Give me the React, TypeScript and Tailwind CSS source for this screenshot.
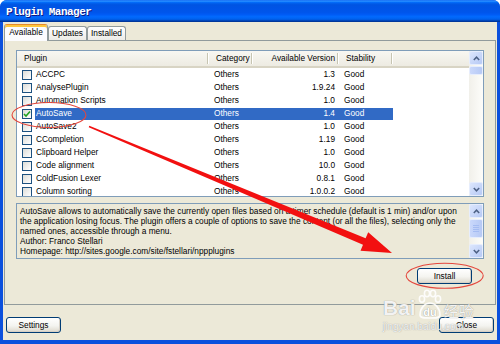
import clsx from 'clsx'
import type { ReactNode } from 'react'

type Plugin = { name: string; version: string; checked?: boolean; selected?: boolean }

const plugins: Plugin[] = [
  { name: 'ACCPC', version: '1.3' },
  { name: 'AnalysePlugin', version: '1.9.24' },
  { name: 'Automation Scripts', version: '1.0' },
  { name: 'AutoSave', version: '1.4', checked: true, selected: true },
  { name: 'AutoSave2', version: '1.0' },
  { name: 'CCompletion', version: '1.19' },
  { name: 'Clipboard Helper', version: '1.0' },
  { name: 'Code alignment', version: '10.0' },
  { name: 'ColdFusion Lexer', version: '0.8.1' },
  { name: 'Column sorting', version: '1.0.0.2' },
]

const description = [
  'AutoSave allows to automatically save the currently open files based on a timer schedule (default is 1 min) and/or upon',
  'the application losing focus. The plugin offers a couple of options to save the content (or all the files), selecting only the',
  'named ones, accessible through a menu.',
  'Author: Franco Stellari',
  'Homepage: http://sites.google.com/site/fstellari/nppplugins',
]

function Chevron({ up }: { up?: boolean }) {
  return (
    <svg width="7" height="5" viewBox="0 0 7 5">
      <polyline
        points={up ? '0.8,4 3.5,1.2 6.2,4' : '0.8,1 3.5,3.8 6.2,1'}
        fill="none"
        stroke="#4D6185"
        strokeWidth="1.5"
      />
    </svg>
  )
}

function ScrollButton({ up }: { up?: boolean }) {
  return (
    <div className="flex h-[14px] w-[14px] shrink-0 items-center justify-center rounded-[2px] border border-[#E6EDFD] bg-[linear-gradient(135deg,#DCE6FD,#B6C9F5)]">
      <Chevron up={up} />
    </div>
  )
}

function ScrollBar({ thumb, grip }: { thumb: string; grip?: boolean }) {
  return (
    <div className="flex w-[14px] shrink-0 flex-col bg-[linear-gradient(to_right,#F1F0EA,#FDFDFA)]">
      <ScrollButton up />
      <div
        className={clsx(
          'flex shrink-0 items-center justify-center rounded-[2px] border border-[#E6EDFD] bg-[linear-gradient(to_right,#CAD8FB,#B6C9F5)]',
          thumb,
        )}
      >
        {grip && (
          <div className="flex flex-col gap-px">
            {[0, 1, 2, 3].map((i) => (
              <div key={i} className="h-px w-[6px] bg-[#A5BCF2]" />
            ))}
          </div>
        )}
      </div>
      <div className="flex-1" />
      <ScrollButton />
    </div>
  )
}

function Checkbox({ checked }: { checked?: boolean }) {
  return (
    <div className="flex h-[10px] w-[10px] items-center justify-center border border-[#1C5180] bg-[linear-gradient(135deg,#DCDCD7,#FFFFFF)]">
      {checked && (
        <svg width="8" height="8" viewBox="0 0 8 8">
          <polyline points="1,4 3,6 7,1.5" fill="none" stroke="#21A121" strokeWidth="1.6" />
        </svg>
      )}
    </div>
  )
}

function HeaderCell({ className, right, children }: { className: string; right?: boolean; children: ReactNode }) {
  return (
    <div className={clsx('flex h-full items-center', className)}>
      <span className={clsx('flex-1', right ? 'pr-[2px] text-right' : 'pl-[7px]')}>{children}</span>
      <span className="h-[11px] w-[2px] border-r border-l border-r-white border-l-[#C7C5B2]" />
    </div>
  )
}

function Button({ children }: { children: ReactNode }) {
  return (
    <button
      type="button"
      className="flex h-[16px] w-[55px] items-center justify-center rounded-[3px] border border-[#003C74] bg-[linear-gradient(to_bottom,#FFFFFF,#F4F4F0_55%,#DCD8CC)] shadow-[inset_-1px_-1px_0_#D6D0C5]"
    >
      {children}
    </button>
  )
}

function PluginList() {
  return (
    <div className="flex h-[147px] shrink-0 border border-[#7F9DB9] bg-white">
      <div className="flex flex-1 flex-col overflow-hidden">
        <div className="flex h-[17px] shrink-0 border-b-2 border-[#D8D4C4] bg-[linear-gradient(to_bottom,#F8F7F2,#EDEBE2)]">
          <HeaderCell className="w-[192px]">Plugin</HeaderCell>
          <HeaderCell className="w-[44px]">Category</HeaderCell>
          <HeaderCell className="w-[86px]" right>
            Available Version
          </HeaderCell>
          <HeaderCell className="w-[54px]">Stability</HeaderCell>
        </div>
        {plugins.map((p) => (
          <div key={p.name} className="flex h-[13px] shrink-0 items-center">
            <div className="flex w-[18px] items-center pl-[5px]">
              <Checkbox checked={p.checked} />
            </div>
            <div className={clsx('flex h-[12px] items-center', p.selected && 'bg-[#316AC5] text-white')}>
              <div className="w-[174px] pl-px">{p.name}</div>
              <div className="w-[44px] pl-[5px]">Others</div>
              <div className="w-[86px] pr-[4px] text-right">{p.version}</div>
              <div className="w-[54px] pl-[5px]">Good</div>
            </div>
          </div>
        ))}
      </div>
      <ScrollBar thumb="mt-px h-[9px]" />
    </div>
  )
}

function Description() {
  return (
    <div className="mt-[6px] flex h-[56px] shrink-0 border border-[#7F9DB9] bg-[#ECE9D8]">
      <div className="flex-1 overflow-hidden whitespace-nowrap pt-[2px] pl-[3px] leading-[10px]">
        {description.map((line) => (
          <div key={line}>{line}</div>
        ))}
      </div>
      <ScrollBar thumb="mt-px h-[19px]" grip />
    </div>
  )
}

function Annotations() {
  return (
    <svg className="pointer-events-none absolute inset-0" width="500" height="344" viewBox="0 0 500 344">
      <ellipse cx="49" cy="115" rx="37" ry="12.5" fill="none" stroke="#E4473D" strokeWidth="1.1" />
      <polygon
        points="89.3,125.8 365.6,238.2 368.2,232.2 392,253 360.5,250.7 363,244.7 88.7,127.2"
        fill="#F21010"
      />
      <ellipse cx="444.7" cy="275.8" rx="38.5" ry="12.5" fill="none" stroke="#E4473D" strokeWidth="1.1" />
    </svg>
  )
}

function Watermark() {
  return (
    <div className="pointer-events-none absolute top-[288px] left-[383px] text-white/90 [text-shadow:0_0_1px_#7a7a7a]">
      <div className="flex h-[30px] items-end">
        <span className="text-[21px] leading-none font-bold">Bai</span>
        <svg width="26" height="30" viewBox="0 0 26 30" className="-mb-px">
          <g fill="none" stroke="#fff" strokeWidth="1.6" opacity="0.9">
            <ellipse cx="6" cy="10" rx="2.6" ry="3.2" />
            <ellipse cx="11" cy="4.5" rx="2.6" ry="3.2" />
            <ellipse cx="17" cy="4.5" rx="2.6" ry="3.2" />
            <ellipse cx="22" cy="10" rx="2.6" ry="3.2" />
            <path d="M4 26 C4 19 9 14 14 14 C19 14 24 19 24 26 C24 29 20 29 14 29 C8 29 4 29 4 26 Z" />
          </g>
          <text x="14" y="27" textAnchor="middle" fontSize="11" fontWeight="bold" fill="#fff">
            du
          </text>
        </svg>
        <span className="ml-[2px] font-['Noto_Sans_CJK_SC',sans-serif] text-[15px] leading-none">经验</span>
      </div>
      <div className="mt-[4px] text-[10px] leading-none">jingyan.baidu.com</div>
    </div>
  )
}

export default function App() {
  return (
    <div className="relative h-[344px] w-[500px] bg-white font-['Liberation_Sans',Arial,sans-serif] text-[8.3px] text-black">
      <div className="flex h-full flex-col overflow-hidden rounded-t-[7px] bg-[#0B50DD]">
        <div className="flex h-[22px] shrink-0 items-center bg-[linear-gradient(to_bottom,#0058ee_0%,#3593ff_4%,#288eff_6%,#127dff_8%,#036ffc_10%,#0262ee_14%,#0057e5_20%,#0054e3_24%,#0055eb_56%,#005bf5_66%,#026afe_76%,#0062ef_86%,#0052d6_92%,#0040ab_94%,#003092_100%)] pt-[3px] pl-[6px]">
          <span className="font-['Liberation_Mono',monospace] text-[11px] font-bold tracking-[-0.5px] text-white [text-shadow:1px_1px_0_#0A1883]">
            Plugin Manager
          </span>
        </div>
        <div className="mx-[3px] mb-[4px] flex flex-1 flex-col bg-[#ECE9D8]">
          <div className="flex h-[18px] shrink-0 items-end pl-[1px]">
            <div className="relative z-10 -mb-px flex h-[17px] w-[44px] items-center justify-center rounded-t-[3px] border border-b-0 border-[#919B9C] border-t-[#E68B2C] bg-[#FCFCFE] pb-px shadow-[inset_0_2px_0_#FFC73C]">
              Available
            </div>
            <div className="flex h-[14px] w-[39px] items-center justify-center rounded-t-[3px] border border-b-0 border-[#919B9C] bg-[linear-gradient(to_bottom,#FFFFFF,#ECEBE6)]">
              Updates
            </div>
            <div className="flex h-[14px] w-[39px] items-center justify-center rounded-t-[3px] border border-b-0 border-[#919B9C] bg-[linear-gradient(to_bottom,#FFFFFF,#ECEBE6)]">
              Installed
            </div>
          </div>
          <div className="mx-[1px] flex h-[265px] shrink-0 flex-col border border-[#919B9C] bg-[#ECE9D8] px-[11px] pt-[9px]">
            <PluginList />
            <Description />
            <div className="mt-[9px] flex justify-end pr-[12px]">
              <Button>Install</Button>
            </div>
          </div>
          <div className="mt-[12px] flex justify-between px-[3px]">
            <Button>Settings</Button>
            <Button>Close</Button>
          </div>
        </div>
      </div>
      <Annotations />
      <Watermark />
    </div>
  )
}
